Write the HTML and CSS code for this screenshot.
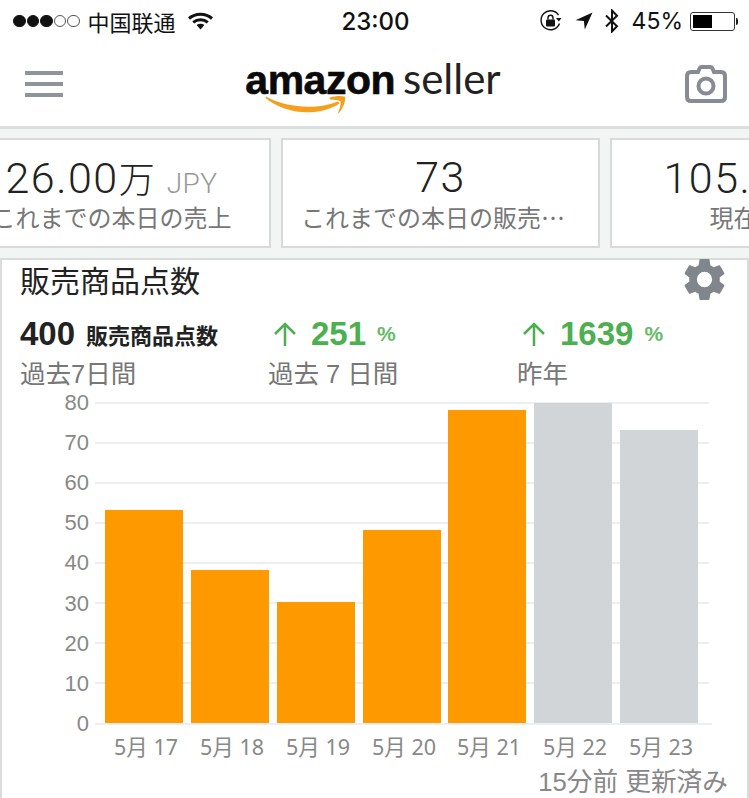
FILE: index.html
```html
<!DOCTYPE html>
<html lang="ja">
<head>
    <meta charset="UTF-8">
    <meta name="viewport" content="width=device-width, initial-scale=1.0">
    <title>amazon seller</title>
    <link rel="stylesheet" href="styles.css">
</head>
<body>
    <header class="top">
        <div class="status-bar">
            <div class="status-left">
                <span class="signal">
                    <i class="dot"></i><i class="dot"></i><i class="dot"></i><i class="dot off"></i><i class="dot off"></i>
                </span>
                <span class="carrier">中国联通</span>
                <svg class="wifi" viewBox="0 0 25 18">
                    <path d="M1 6.500C7.500 .8 17.500 .8 24 6.500" />
                    <path d="M5.200 10.300c4.200-3.400 10.400-3.400 14.600 0" />
                    <path class="wifi-tip" d="M8.600 13c2.300-1.600 5.500-1.600 7.800 0l-3.900 4.600z" />
                </svg>
            </div>
            <div class="clock">23:00</div>
            <div class="status-right">
                <svg class="rotate-lock" viewBox="0 0 24 24">
                    <path class="ring" d="M20.500 14.500A9.500 9.500 0 1 1 19.500 6" />
                    <path class="solid" d="M17 9l5.500 0-2.700 3.600z" />
                    <rect class="solid" x="7" y="10.500" width="9" height="7" rx="1" />
                    <path class="ring thin" d="M9 10.500V8.800a2.500 2.500 0 0 1 5 0v1.700" />
                </svg>
                <svg class="location" viewBox="0 0 18 18"><path d="M17.500 .5L.5 8.200l8.400.8.900 8.500z" /></svg>
                <svg class="bluetooth" viewBox="0 0 14 24"><path d="M1 6.500l11 10.800L7 22.500V1.500l5 5.200L1 17.500" /></svg>
                <span class="battery-pct">45%</span>
                <span class="battery"><span class="battery-fill"></span></span>
                <span class="battery-cap"></span>
            </div>
        </div>
        <nav class="nav">
            <div class="menu"><span></span><span></span><span></span></div>
            <div class="logo">
                <span class="logo-amazon">amazon</span>
                <span class="logo-seller">seller</span>
                <svg class="smile" viewBox="0 0 82 20">
                    <path class="smile-curve" d="M1 1.500C22 13 52 15 73 6.500l1.500 2C56 21 22 21 .5 3z" />
                    <path class="smile-curve" d="M65 2.500c5-1.500 11-2 15-.8.8 4-1.500 11-6 16.300-.6.500-1 .2-.8-.4 1.500-4 3-8.500 2.400-11.300-2.500-1.300-6.500-1.500-10.300-1.800-.8-.4-.8-1.600-.3-2z" />
                </svg>
            </div>
            <svg class="camera" viewBox="0 0 42 38">
                <path d="M13 7l1.500-3.500c.3-.8 1-1.500 2-1.500h9c1 0 1.700.7 2 1.500L29 7h7c2.500 0 4 1.500 4 4v21c0 2.500-1.500 4-4 4H6c-2.500 0-4-1.500-4-4V11c0-2.500 1.500-4 4-4z" />
                <circle cx="21" cy="21" r="7.500" />
            </svg>
        </nav>
    </header>

    <main class="content">
        <section class="summary">
            <div class="tile">
                <div class="tile-value">26.00<span class="man">万</span><small>JPY</small></div>
                <div class="tile-label">これまでの本日の売上</div>
            </div>
            <div class="tile">
                <div class="tile-value">73</div>
                <div class="tile-label">これまでの本日の販売点数</div>
            </div>
            <div class="tile">
                <div class="tile-value">105.0<span class="man">万</span><small>JPY</small></div>
                <div class="tile-label">現在の残高</div>
            </div>
        </section>

        <section class="panel">
            <div class="panel-head">
                <h2>販売商品点数</h2>
                <svg class="gear" viewBox="0 0 24 24">
                    <path d="M19.140 12.940c.04-.3.06-.61.06-.94s-.02-.64-.07-.94l2.030-1.580a.49.490 0 0 0 .12-.61l-1.920-3.320a.49.490 0 0 0-.59-.22l-2.390.96c-.5-.38-1.030-.7-1.620-.94l-.36-2.540a.48.480 0 0 0-.48-.41h-3.840a.47.470 0 0 0-.47.41l-.36 2.540c-.59.24-1.130.57-1.620.94l-2.390-.96a.48.480 0 0 0-.59.22L2.730 8.870a.48.480 0 0 0 .12.61l2.030 1.580c-.05.3-.09.63-.09.94s.02.64.07.94l-2.030 1.580a.49.490 0 0 0-.12.61l1.920 3.320c.12.22.37.29.59.22l2.390-.96c.5.38 1.030.7 1.620.94l.36 2.540c.05.24.24.41.48.41h3.840c.24 0 .44-.17.47-.41l.36-2.540c.59-.24 1.130-.56 1.620-.94l2.390.96c.22.08.47 0 .59-.22l1.920-3.320a.47.470 0 0 0-.12-.61zM12 15.600a3.600 3.600 0 1 1 0-7.200 3.600 3.600 0 0 1 0 7.200z" />
                </svg>
            </div>
            <div class="stats">
                <div class="stat">
                    <div class="stat-value"><b>400</b><span class="stat-unit">販売商品点数</span></div>
                    <div class="stat-label">過去7日間</div>
                </div>
                <div class="stat">
                    <div class="stat-value up">
                        <svg class="arrow" viewBox="0 0 24 24"><path d="M12 24V2M2 12L12 2l10 10" /></svg>
                        <b>251</b><span class="pct">%</span>
                    </div>
                    <div class="stat-label">過去 7 日間</div>
                </div>
                <div class="stat">
                    <div class="stat-value up">
                        <svg class="arrow" viewBox="0 0 24 24"><path d="M12 24V2M2 12L12 2l10 10" /></svg>
                        <b>1639</b><span class="pct">%</span>
                    </div>
                    <div class="stat-label">昨年</div>
                </div>
            </div>

            <svg class="chart" viewBox="2 395 745 403">
                <g class="grid">
                    <line x1="95" x2="709" y1="403" y2="403" />
                    <line x1="95" x2="709" y1="443" y2="443" />
                    <line x1="95" x2="709" y1="483" y2="483" />
                    <line x1="95" x2="709" y1="523" y2="523" />
                    <line x1="95" x2="709" y1="563" y2="563" />
                    <line x1="95" x2="709" y1="603" y2="603" />
                    <line x1="95" x2="709" y1="643" y2="643" />
                    <line x1="95" x2="709" y1="683" y2="683" />
                    <line x1="95" x2="712" y1="724" y2="724" />
                </g>
                <g class="y-axis">
                    <text x="89" y="410">80</text>
                    <text x="89" y="450">70</text>
                    <text x="89" y="490">60</text>
                    <text x="89" y="530">50</text>
                    <text x="89" y="570">40</text>
                    <text x="89" y="611">30</text>
                    <text x="89" y="651">20</text>
                    <text x="89" y="691">10</text>
                    <text x="89" y="731">0</text>
                </g>
                <g class="bars">
                    <rect x="105" y="510" width="78" height="213" />
                    <rect x="191" y="570" width="78" height="153" />
                    <rect x="277" y="602" width="78" height="121" />
                    <rect x="363" y="530" width="78" height="193" />
                    <rect x="448" y="410" width="78" height="313" />
                </g>
                <g class="bars today">
                    <rect x="534" y="403" width="78" height="320" />
                    <rect x="620" y="430" width="78" height="293" />
                </g>
                <g class="x-axis">
                    <text x="146" y="755">5月 17</text>
                    <text x="232" y="755">5月 18</text>
                    <text x="318" y="755">5月 19</text>
                    <text x="404" y="755">5月 20</text>
                    <text x="489" y="755">5月 21</text>
                    <text x="575" y="755">5月 22</text>
                    <text x="661" y="755">5月 23</text>
                </g>
                <text class="updated" x="728" y="791">15分前 更新済み</text>
            </svg>
        </section>
    </main>
</body>
</html>
```

FILE: styles.css
```css
* {
    margin: 0;
    padding: 0;
    box-sizing: border-box;
}

html, body {
    height: 100%;
    overflow: hidden;
}

body {
    background-color: #f3f4f4;
    font-family: "Liberation Sans", "Noto Sans CJK JP", sans-serif;
    color: #222;
}

.top {
    height: 129px;
    background: white;
    border-bottom: 3px solid #dcdddd;
}

.status-bar {
    height: 42px;
    display: grid;
    grid-template-columns: 1fr auto 1fr;
    align-items: center;
    padding: 0 11px 0 13px;
    color: #111;
}

.status-left,
.status-right {
    display: flex;
    align-items: center;
}

.status-right {
    justify-content: flex-end;
}

.signal {
    display: flex;
    gap: 1px;
}

.dot {
    width: 12.500px;
    height: 12.500px;
    border-radius: 50%;
    background: #111;
    border: 1px solid #111;
}

.dot.off {
    background: none;
    border-color: #555;
}

.carrier {
    margin-left: 8px;
    font-family: "Noto Sans CJK SC", sans-serif;
    font-size: 22px;
}

.wifi {
    width: 25px;
    height: 18px;
    margin-left: 12px;
    fill: none;
    stroke: #111;
    stroke-width: 3;
}

.wifi-tip {
    fill: #111;
    stroke: none;
}

.clock {
    font-family: Inter, sans-serif;
    font-size: 24px;
    font-weight: 500;
}

.rotate-lock {
    width: 24px;
    height: 24px;
    fill: none;
}

.rotate-lock .ring {
    stroke: #111;
    stroke-width: 1.400;
    fill: none;
}

.rotate-lock .solid {
    fill: #111;
}

.location {
    width: 18px;
    height: 18px;
    margin-left: 12px;
    fill: #111;
}

.bluetooth {
    width: 14px;
    height: 24px;
    margin-left: 12px;
    fill: none;
    stroke: #111;
    stroke-width: 2;
}

.battery-pct {
    margin-left: 13px;
    font-family: Inter, sans-serif;
    font-size: 23px;
}

.battery {
    width: 45px;
    height: 19px;
    margin-left: 7px;
    padding: 2px;
    border: 1px solid #333;
    border-radius: 3px;
    display: block;
}

.battery-fill {
    display: block;
    width: 19px;
    height: 100%;
    background: #000;
}

.battery-cap {
    width: 2px;
    height: 7px;
    margin-left: 1px;
    background: #222;
    border-radius: 0 2px 2px 0;
}

.nav {
    height: 84px;
    display: flex;
    align-items: center;
    justify-content: space-between;
    padding: 0 22px 0 25px;
}

.menu {
    width: 38px;
    display: flex;
    flex-direction: column;
    gap: 7px;
}

.menu span {
    height: 4px;
    background: #8f949b;
}

.logo {
    position: relative;
    display: flex;
    align-items: baseline;
    gap: 8px;
    margin: -12px 2px 0 0;
}

.logo-amazon {
    font-size: 41px;
    font-weight: bold;
    letter-spacing: -0.5px;
    color: #0a0a0a;
    -webkit-text-stroke: 0.6px #0a0a0a;
}

.logo-seller {
    font-family: Lato, sans-serif;
    font-size: 42px;
    color: #222;
}

.smile {
    position: absolute;
    left: 20px;
    top: 42px;
    width: 82px;
    height: 20px;
}

.smile-curve {
    fill: #f59f1c;
}

.camera {
    width: 42px;
    height: 38px;
    fill: none;
    stroke: #888c92;
    stroke-width: 4;
}

.content {
    padding-top: 9px;
}

.summary {
    display: flex;
    gap: 10px;
    margin-left: -48px;
}

.tile {
    flex: 0 0 319px;
    min-width: 0;
    height: 110px;
    padding: 12px 18px 0;
    background: white;
    border: 2px solid #d8dada;
    text-align: center;
}

.tile-value {
    height: 50px;
    font-family: Roboto, "Noto Sans CJK JP", sans-serif;
    font-weight: 300;
    font-size: 43px;
    letter-spacing: 1.500px;
    line-height: 50px;
    white-space: nowrap;
    color: #222;
}

.man {
    font-family: "Noto Sans CJK JP", sans-serif;
    font-size: 36px;
    letter-spacing: 0;
}

.tile-value small {
    margin-left: 12px;
    font-size: 28px;
    letter-spacing: 0.500px;
    color: #999;
}

.tile-label {
    font-family: "Noto Sans CJK JP", sans-serif;
    font-size: 24px;
    line-height: 30px;
    color: #777;
    white-space: nowrap;
    overflow: hidden;
    text-overflow: ellipsis;
}

.panel {
    height: 600px;
    margin-top: 10px;
    background: white;
    border: 2px solid #dadbdb;
}

.panel-head {
    height: 40px;
    display: flex;
    align-items: center;
    justify-content: space-between;
    padding: 0 17px 0 18px;
}

.panel-head h2 {
    margin-top: -2px;
    font-family: "Noto Sans CJK JP", sans-serif;
    font-size: 30px;
    font-weight: 400;
    color: #222;
}

.gear {
    width: 51px;
    height: 51px;
    margin-top: -2px;
    fill: #81868c;
}

.stats {
    display: grid;
    grid-template-columns: 248px 249px 1fr;
    padding: 14px 0 0 18px;
    height: 95px;
}

.stat-value {
    height: 40px;
    display: flex;
    align-items: center;
    white-space: nowrap;
}

.stat-value b {
    font-size: 33px;
}

.stat-unit {
    margin-left: 11px;
    font-family: "Noto Sans CJK JP", sans-serif;
    font-size: 22px;
    font-weight: 700;
}

.up {
    color: #4caf50;
}

.arrow {
    width: 24px;
    height: 24px;
    margin: 0 14px 0 5px;
    fill: none;
    stroke: #4caf50;
    stroke-width: 2.500;
}

.pct {
    margin-left: 11px;
    font-size: 21px;
    font-weight: bold;
    opacity: .85;
}

.stat-label {
    margin-top: 1px;
    font-size: 25.500px;
    line-height: 38px;
    color: #777;
}

.chart {
    display: block;
    width: 745px;
    height: 403px;
}

.grid line {
    stroke: #edeef0;
    stroke-width: 2;
}

.y-axis text {
    font-family: "Liberation Sans", sans-serif;
    font-size: 22px;
    fill: #888;
    text-anchor: end;
}

.bars rect {
    fill: #ff9900;
}

.bars.today rect {
    fill: #d2d5d8;
}

.x-axis text {
    font-family: "Noto Sans", "Noto Sans CJK JP", sans-serif;
    font-size: 21.500px;
    fill: #888;
    text-anchor: middle;
}

.updated {
    font-family: "Liberation Sans", "Noto Sans CJK JP", sans-serif;
    font-size: 25.700px;
    fill: #888;
    text-anchor: end;
}
```
